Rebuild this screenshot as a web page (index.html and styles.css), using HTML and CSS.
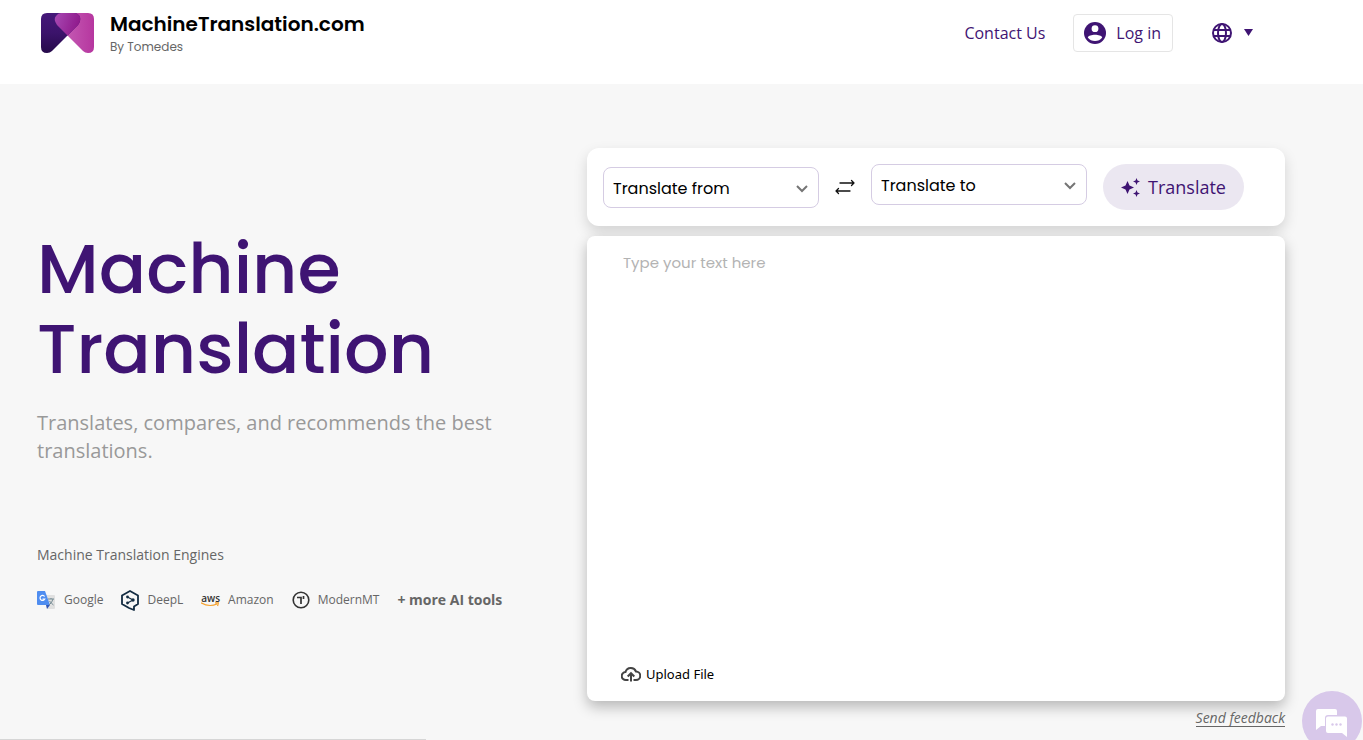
FILE: index.html
```html
<!DOCTYPE html>
<html lang="en">
<head>
<meta charset="utf-8">
<meta name="viewport" content="width=device-width, initial-scale=1">
<title>MachineTranslation.com</title>
<link rel="stylesheet" href="styles.css">
</head>
<body>
<header class="site-header">
  <a class="brand" href="#">
    <svg class="brand-logo" viewBox="0 0 53 40" aria-hidden="true">
      <defs>
        <linearGradient id="dark" x1="0" y1="0" x2="0" y2="1"><stop offset="0" stop-color="#451879"/><stop offset=".5" stop-color="#3b136b"/><stop offset="1" stop-color="#260a4a"/></linearGradient>
        <linearGradient id="pink" x1="0" y1="0" x2="1" y2="0"><stop offset="0" stop-color="#c968bb"/><stop offset="1" stop-color="#b6369f"/></linearGradient>
        <linearGradient id="mix" x1="0" y1="0" x2="1" y2=".3"><stop offset="0" stop-color="#a84ab4"/><stop offset="1" stop-color="#901a8c"/></linearGradient>
      </defs>
      <path fill="url(#pink)" d="M20 0H47Q53 0 53 6V34Q53 40 47 40Q44 40 42 38L16 12Q12 6 15 3Q17 0 20 0Z"/>
      <path fill="url(#dark)" d="M6 0H33Q37 0 39 4Q40 8 37 12L11 38Q9 40 6 40Q0 40 0 34V6Q0 0 6 0Z"/>
      <path fill="url(#mix)" d="M20 0H33Q37 0 39 4Q40 8 37 12L26.500 22.500L16 12Q12 6 15 3Q17 0 20 0Z"/>
    </svg>
    <span class="brand-text">
      <span class="brand-name">MachineTranslation.com</span>
      <span class="brand-by">By Tomedes</span>
    </span>
  </a>
  <nav class="site-nav">
    <a class="nav-link" href="#">Contact Us</a>
    <a class="login" href="#">
      <svg class="icon-user" viewBox="0 0 22 22" aria-hidden="true"><circle cx="11" cy="11" r="11" fill="#3f1473"/><circle cx="11" cy="6.700" r="3.400" fill="#fff"/><path fill="#fff" d="M3.800 15.500C5 11.900 17 11.900 18.200 15.500C15 20.300 7 20.300 3.800 15.500Z"/></svg>
      Log in
    </a>
    <button class="language" type="button" aria-label="Language">
      <svg class="icon-globe" viewBox="0 0 20 20" fill="none" stroke="#3f1473" stroke-width="2" aria-hidden="true"><circle cx="10" cy="10" r="9"/><ellipse cx="10" cy="10" rx="4" ry="9"/><path d="M1.500 7H18.500M1.500 13H18.500"/></svg>
      <svg class="icon-caret" viewBox="0 0 9 7" aria-hidden="true"><path fill="#3f1473" d="M0 0H9L4.500 7Z"/></svg>
    </button>
  </nav>
</header>
<main class="hero">
  <section class="intro">
    <h1 class="headline">Machine Translation</h1>
    <p class="tagline">Translates, compares, and recommends the best translations.</p>
    <h2 class="engines-title">Machine Translation Engines</h2>
    <ul class="engines">
      <li class="engine">
        <svg class="icon-google" viewBox="0 0 19 19" aria-hidden="true"><path fill="#e0e0e0" d="M7 4H17Q18 4 18 5V17Q18 18 17 18H10Z"/><path fill="#4f8df0" d="M1 0H8L13 14H1Q0 14 0 13V1Q0 0 1 0Z"/><path fill="#3157b7" d="M9 14H13L10 18Z"/><path d="M7.600 5.500A2.500 2.500 0 1 0 7.800 8H5.500" fill="none" stroke="#fff" stroke-width="1.200"/><path d="M11 8H17M14 7V8M16 8Q15 12 12 14M12.500 10Q14 12 16.500 14" fill="none" stroke="#758b93"/></svg>
        Google
      </li>
      <li class="engine">
        <svg class="icon-deepl" viewBox="0 0 18 21" fill="none" stroke="#122b41" aria-hidden="true"><path stroke-width="1.800" stroke-linejoin="round" d="M9 1L17 5.500V14L13 16.500V20L8 18L1 14V5.500Z"/><path stroke-width="1.200" d="M6.500 7L12 10L6.500 13"/><g fill="#122b41" stroke="none"><circle cx="6.500" cy="7" r="1.400"/><circle cx="12" cy="10" r="1.700"/><circle cx="6.500" cy="13" r="1.400"/></g></svg>
        DeepL
      </li>
      <li class="engine">
        <span class="aws-mark" aria-hidden="true">
          <span class="aws-word">aws</span>
          <svg class="aws-smile" viewBox="0 0 18 5" fill="none" stroke="#f5a12c" stroke-width="1.200"><path d="M0 .8Q8 5.500 16 2M14 .8L17.400 .8L16.600 4"/></svg>
        </span>
        Amazon
      </li>
      <li class="engine">
        <svg class="icon-mmt" viewBox="0 0 18 18" fill="none" stroke="#333" aria-hidden="true"><circle cx="9" cy="9" r="7.800" stroke-width="1.600"/><path stroke-width="1.700" d="M5 6.500H9V13M11.500 5V8"/></svg>
        ModernMT
      </li>
      <li class="engine engine-more">+ more AI tools</li>
    </ul>
  </section>
  <form class="translator">
    <div class="toolbar">
      <span class="select-box select-source">
        <select class="select" aria-label="Translate from"><option>Translate from</option></select>
        <svg class="chevron" viewBox="0 0 12 8" fill="none" stroke="#757575" stroke-width="2" aria-hidden="true"><path d="M1 1L6 6L11 1"/></svg>
      </span>
      <button class="swap" type="button" aria-label="Swap languages">
        <svg class="icon-swap" viewBox="0 0 20 16" fill="none" stroke="#111" stroke-width="1.300" stroke-linecap="round" stroke-linejoin="round" aria-hidden="true"><path d="M5 4H19M16.500 1.500L19 4L16.500 6.500M15 12H1M3.500 9.500L1 12L3.500 14.500"/></svg>
      </button>
      <span class="select-box">
        <select class="select" aria-label="Translate to"><option>Translate to</option></select>
        <svg class="chevron" viewBox="0 0 12 8" fill="none" stroke="#757575" stroke-width="2" aria-hidden="true"><path d="M1 1L6 6L11 1"/></svg>
      </span>
      <button class="translate" type="submit">
        <svg class="icon-sparkle" viewBox="0 0 19 19" fill="#3f1473" aria-hidden="true"><path d="M6.500 3L8.500 7.500L13 9.500L8.500 11.500L6.500 16L4.500 11.500L0 9.500L4.500 7.500Z"/><path d="M15.500 0L16.500 2.500L19 3.500L16.500 4.500L15.500 7L14.500 4.500L12 3.500L14.500 2.500Z"/><path d="M15.500 12L16.500 14.500L19 15.500L16.500 16.500L15.500 19L14.500 16.500L12 15.500L14.500 14.500Z"/></svg>
        Translate
      </button>
    </div>
    <div class="editor">
      <textarea class="source-text" placeholder="Type your text here" aria-label="Text to translate"></textarea>
      <button class="upload" type="button">
        <svg class="icon-cloud" viewBox="0 0 20 16" fill="none" stroke="#444" stroke-width="2" aria-hidden="true"><path d="M7.500 14H5A4 4 0 0 1 4.500 6A5.600 5.600 0 0 1 15 5.500A4.200 4.200 0 0 1 15 14H12.500M10 15.500V7.500M6.700 10.500L10 7.200L13.300 10.500"/></svg>
        Upload File
      </button>
    </div>
    <a class="feedback" href="#">Send feedback</a>
  </form>
</main>
<button class="chat" type="button" aria-label="Open chat">
  <svg class="icon-chat" viewBox="0 0 32 29" aria-hidden="true"><path fill="#fff" d="M2 0H19Q21 0 21 2V6H12Q9 6 9 9V17H5L0 21V2Q0 0 2 0Z"/><path fill="#fff" d="M12 7.500H29Q31 7.500 31 9.500V28L26 24H12Q10 24 10 22V9.500Q10 7.500 12 7.500Z"/><g fill="#d8c8ea"><circle cx="16.500" cy="15.500" r="1.200"/><circle cx="20.500" cy="15.500" r="1.200"/><circle cx="24.500" cy="15.500" r="1.200"/></g></svg>
</button>
<div class="status-edge"></div>
</body>
</html>
```
FILE: styles.css
```css
* { box-sizing: border-box; }
body {
  margin: 0;
  min-height: 100vh;
  display: flex;
  flex-direction: column;
  background: #f7f7f7;
  font-family: "Open Sans", "Noto Sans", sans-serif;
  color: #000;
}
a { color: inherit; text-decoration: none; }
button { font: inherit; border: 0; padding: 0; background: none; cursor: pointer; }
svg { display: block; flex: none; }

.site-header {
  display: flex;
  justify-content: space-between;
  align-items: flex-start;
  height: 84px;
  padding: 13px 110px 0 41px;
  background: #fff;
}
.brand { display: flex; gap: 16px; }
.brand-logo { width: 53px; height: 40px; }
.brand-text { display: flex; flex-direction: column; font-family: Poppins, Inter, sans-serif; }
.brand-name { font-size: 20px; line-height: 22px; font-weight: 600; }
.brand-by { font-size: 12px; line-height: 24px; color: #666; }
.site-nav { display: flex; align-items: center; color: #3f1473; font-size: 16px; }
.nav-link { margin-right: 28px; }
.login {
  display: flex;
  align-items: center;
  gap: 10px;
  height: 38px;
  margin: 1px 39px 0 0;
  padding: 0 11px 0 10px;
  border: 1px solid #e5e5e5;
  border-radius: 4px;
}
.icon-user { width: 22px; height: 22px; }
.language { display: flex; align-items: center; gap: 12px; }
.icon-globe { width: 20px; height: 20px; }
.icon-caret { width: 9px; height: 7px; }

.hero {
  flex: 1;
  display: grid;
  grid-template-columns: 550fr 698fr;
  align-items: start;
  padding: 64px 78px 0 37px;
}
.intro { padding-top: 81px; }
.headline {
  max-width: 480px;
  margin: 0 0 20px;
  font-family: Poppins, Inter, sans-serif;
  font-size: 70px;
  line-height: 80px;
  font-weight: 500;
  color: #3f1473;
}
.tagline {
  max-width: 480px;
  margin: 0 0 80px;
  font-size: 20px;
  line-height: 28px;
  color: #999;
}
.engines-title { margin: 0 0 24px; font-size: 14px; line-height: 20px; font-weight: 400; color: #666; }
.engines {
  display: flex;
  align-items: center;
  gap: 18px;
  margin: 0;
  padding: 0;
  list-style: none;
  font-size: 12px;
  line-height: 22px;
  color: #666;
}
.engine { display: flex; align-items: center; gap: 8px; white-space: nowrap; }
.engine-more { font-size: 14px; font-weight: 700; }
.icon-google { width: 19px; height: 19px; }
.icon-deepl { width: 18px; height: 21px; }
.icon-mmt { width: 18px; height: 18px; }
.aws-mark { display: flex; flex-direction: column; }
.aws-word { font-size: 10px; line-height: 8px; font-weight: 600; color: #333; }
.aws-smile { width: 18px; height: 5px; }

.translator { display: flex; flex-direction: column; gap: 10px; }
.toolbar {
  display: flex;
  align-items: flex-start;
  height: 78px;
  padding: 16px;
  border-radius: 12px;
  background: #fff;
  box-shadow: 0 6px 14px rgba(0, 0, 0, .15);
}
.select-box { display: grid; align-items: center; flex: 0 1 216px; }
.select-source { margin-top: 3px; }
.select {
  grid-area: 1 / 1;
  width: 100%;
  height: 41px;
  padding: 2px 32px 0 9px;
  border: 1px solid #d5cce3;
  border-radius: 8px;
  appearance: none;
  background: #fff;
  font-family: Poppins, Inter, sans-serif;
  font-size: 16px;
  color: #000;
}
.chevron { grid-area: 1 / 1; justify-self: end; width: 12px; height: 8px; margin: 2px 11px 0 0; pointer-events: none; }
.swap { display: flex; align-items: center; height: 46px; margin: 0 16px; }
.icon-swap { width: 20px; height: 16px; }
.translate {
  display: flex;
  align-items: center;
  gap: 8px;
  height: 46px;
  margin-left: 16px;
  padding: 0 18px;
  border-radius: 23px;
  background: #ebe7f1;
  color: #3f1473;
  font-size: 18px;
}
.icon-sparkle { width: 19px; height: 19px; }
.editor {
  display: flex;
  flex-direction: column;
  align-items: flex-start;
  min-height: 465px;
  padding: 14px 34px 16px;
  border-radius: 8px;
  background: #fff;
  box-shadow: 0 6px 14px rgba(0, 0, 0, .26);
}
.source-text {
  flex: 1;
  width: 100%;
  padding: 0 2px;
  border: 0;
  outline: 0;
  resize: none;
  font-family: Poppins, Inter, sans-serif;
  font-size: 15px;
  line-height: 26px;
}
.source-text::placeholder { color: #b3b3b3; }
.upload { display: flex; align-items: center; gap: 5px; font-family: "Noto Sans", sans-serif; font-size: 13px; line-height: 22px; color: #000; }
.icon-cloud { width: 20px; height: 16px; }
.feedback {
  align-self: flex-end;
  margin-top: -2px;
  border-bottom: 1px solid #666;
  font-size: 14px;
  line-height: 17px;
  font-style: italic;
  color: #666;
}
.chat {
  position: fixed;
  right: 1px;
  bottom: -11px;
  display: grid;
  place-items: center;
  width: 60px;
  height: 60px;
  padding-top: 4px;
  border-radius: 50%;
  background: #d8c8ea;
}
.icon-chat { width: 32px; height: 29px; }
.status-edge {
  position: fixed;
  left: 0;
  bottom: 0;
  width: 426px;
  height: 1px;
  background: #d6d6d6;
}
```
